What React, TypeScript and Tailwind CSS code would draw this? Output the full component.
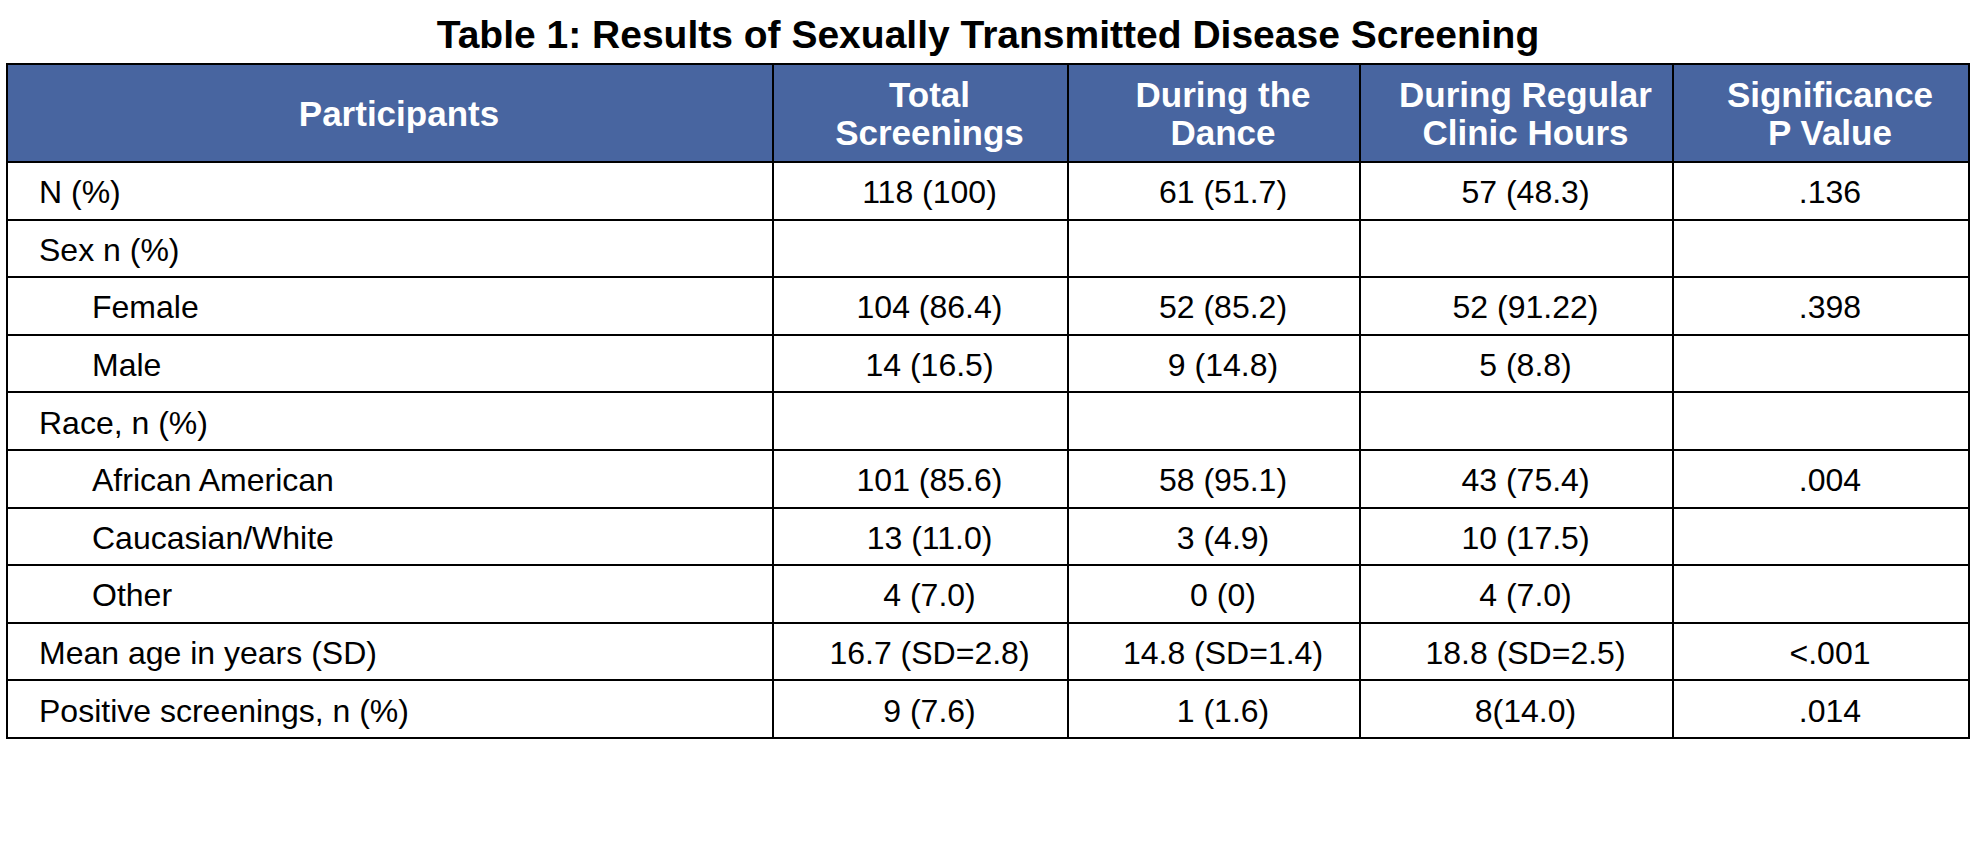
import React from 'react';

type Row = {
  label: string;
  indent?: boolean;
  values: string[];
};

const rows: Row[] = [
  { label: 'N (%)', values: ['118 (100)', '61 (51.7)', '57 (48.3)', '.136'] },
  { label: 'Sex n (%)', values: ['', '', '', ''] },
  { label: 'Female', indent: true, values: ['104 (86.4)', '52 (85.2)', '52 (91.22)', '.398'] },
  { label: 'Male', indent: true, values: ['14 (16.5)', '9 (14.8)', '5 (8.8)', ''] },
  { label: 'Race, n (%)', values: ['', '', '', ''] },
  { label: 'African American', indent: true, values: ['101 (85.6)', '58 (95.1)', '43 (75.4)', '.004'] },
  { label: 'Caucasian/White', indent: true, values: ['13 (11.0)', '3 (4.9)', '10 (17.5)', ''] },
  { label: 'Other', indent: true, values: ['4 (7.0)', '0 (0)', '4 (7.0)', ''] },
  { label: 'Mean age in years (SD)', values: ['16.7 (SD=2.8)', '14.8 (SD=1.4)', '18.8 (SD=2.5)', '<.001'] },
  { label: 'Positive screenings, n (%)', values: ['9 (7.6)', '1 (1.6)', '8(14.0)', '.014'] },
];

const headers = [
  ['Participants'],
  ['Total', 'Screenings'],
  ['During the', 'Dance'],
  ['During Regular', 'Clinic Hours'],
  ['Significance', 'P Value'],
];

const App: React.FC = () => {
  return (
    <div className="min-h-screen w-full bg-white pt-[12px] font-['Liberation_Sans',Arial,sans-serif] text-black">
      <div className="ml-[6px] w-[1964px]">
        <h1 className="mb-[6px] text-center text-[39px] font-bold leading-[45px]">
          Table 1: Results of Sexually Transmitted Disease Screening
        </h1>

        <div className="grid grid-cols-[766px_295px_292px_313px_296px] border-l-2 border-t-2 border-black">
          {/* header row */}
          {headers.map((lines, i) => (
            <div
              key={i}
              className="flex h-[98px] flex-col items-center justify-center border-b-2 border-r-2 border-black bg-[#4865a0] pl-[18px] pt-[2px] text-center text-[35px] font-bold leading-[38.4px] text-white"
            >
              {lines.map((l) => (
                <span key={l}>{l}</span>
              ))}
            </div>
          ))}

          {/* body rows */}
          {rows.map((row) => (
            <React.Fragment key={row.label}>
              <div
                className={`flex h-[57.6px] items-center border-b-2 border-r-2 border-black pt-[3px] text-[32px] ${
                  row.indent ? 'pl-[84px]' : 'pl-[31px]'
                }`}
              >
                {row.label}
              </div>
              {row.values.map((v, j) => (
                <div
                  key={j}
                  className="flex h-[57.6px] items-center justify-center border-b-2 border-r-2 border-black pl-[18px] pt-[3px] text-[32px]"
                >
                  {v}
                </div>
              ))}
            </React.Fragment>
          ))}
        </div>
      </div>
    </div>
  );
};

export default App;
